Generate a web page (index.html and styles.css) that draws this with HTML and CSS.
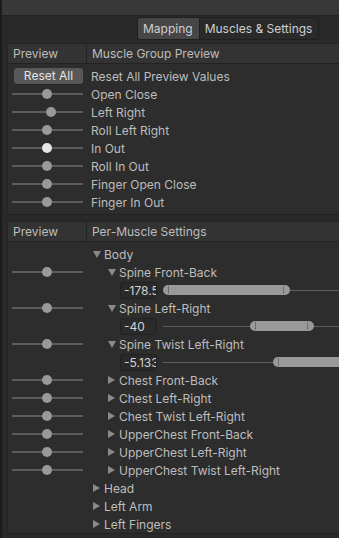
FILE: index.html
```html
<!DOCTYPE html>
<html>
<head>
<meta charset="utf-8">
<link rel="stylesheet" href="styles.css">
</head>
<body>
<div class="window">
  <div class="topband"></div>
  <div class="tabbar">
    <div class="tabs">
      <div class="tab active">Mapping</div>
      <div class="tab">Muscles &amp; Settings</div>
    </div>
  </div>

  <div class="section s1">
    <div class="head">
      <div class="hcol">Preview</div>
      <div class="hmain">Muscle Group Preview</div>
    </div>
    <div class="rows">
      <div class="row"><div class="lcol"><button class="btn">Reset All</button></div><div class="label">Reset All Preview Values</div></div>
      <div class="row"><div class="lcol"><div class="slider"><span class="thumb" style="left:35px"></span></div></div><div class="label">Open Close</div></div>
      <div class="row"><div class="lcol"><div class="slider"><span class="thumb" style="left:39px"></span></div></div><div class="label">Left Right</div></div>
      <div class="row"><div class="lcol"><div class="slider"><span class="thumb" style="left:35px"></span></div></div><div class="label">Roll Left Right</div></div>
      <div class="row"><div class="lcol"><div class="slider"><span class="thumb hot" style="left:35px"></span></div></div><div class="label">In Out</div></div>
      <div class="row"><div class="lcol"><div class="slider"><span class="thumb" style="left:35px"></span></div></div><div class="label">Roll In Out</div></div>
      <div class="row"><div class="lcol"><div class="slider"><span class="thumb" style="left:35px"></span></div></div><div class="label">Finger Open Close</div></div>
      <div class="row"><div class="lcol"><div class="slider"><span class="thumb" style="left:35px"></span></div></div><div class="label">Finger In Out</div></div>
    </div>
  </div>

  <div class="section s2">
    <div class="head">
      <div class="hcol">Preview</div>
      <div class="hmain">Per-Muscle Settings</div>
    </div>
    <div class="rows">
      <div class="row"><div class="lcol"></div><div class="tree d0"><span class="tri down"></span>Body</div></div>
      <div class="row"><div class="lcol"><div class="slider"><span class="thumb" style="left:35px"></span></div></div><div class="tree d1"><span class="tri down"></span>Spine Front-Back</div></div>
      <div class="row"><div class="lcol"></div><div class="range-row"><div class="field">-178.54</div><div class="range"><span class="bar" style="left:0px;width:127px"></span></div></div></div>
      <div class="row"><div class="lcol"><div class="slider"><span class="thumb" style="left:35px"></span></div></div><div class="tree d1"><span class="tri down"></span>Spine Left-Right</div></div>
      <div class="row"><div class="lcol"></div><div class="range-row"><div class="field">-40</div><div class="range"><span class="bar" style="left:87px;width:64px"></span></div></div></div>
      <div class="row"><div class="lcol"><div class="slider"><span class="thumb" style="left:35px"></span></div></div><div class="tree d1"><span class="tri down"></span>Spine Twist Left-Right</div></div>
      <div class="row"><div class="lcol"></div><div class="range-row"><div class="field">-5.1333</div><div class="range"><span class="bar" style="left:110px;width:127px"></span></div></div></div>
      <div class="row"><div class="lcol"><div class="slider"><span class="thumb" style="left:35px"></span></div></div><div class="tree d1"><span class="tri right"></span>Chest Front-Back</div></div>
      <div class="row"><div class="lcol"><div class="slider"><span class="thumb" style="left:35px"></span></div></div><div class="tree d1"><span class="tri right"></span>Chest Left-Right</div></div>
      <div class="row"><div class="lcol"><div class="slider"><span class="thumb" style="left:35px"></span></div></div><div class="tree d1"><span class="tri right"></span>Chest Twist Left-Right</div></div>
      <div class="row"><div class="lcol"><div class="slider"><span class="thumb" style="left:35px"></span></div></div><div class="tree d1"><span class="tri right"></span>UpperChest Front-Back</div></div>
      <div class="row"><div class="lcol"><div class="slider"><span class="thumb" style="left:35px"></span></div></div><div class="tree d1"><span class="tri right"></span>UpperChest Left-Right</div></div>
      <div class="row"><div class="lcol"><div class="slider"><span class="thumb" style="left:35px"></span></div></div><div class="tree d1"><span class="tri right"></span>UpperChest Twist Left-Right</div></div>
      <div class="row"><div class="lcol"></div><div class="tree d0"><span class="tri right"></span>Head</div></div>
      <div class="row"><div class="lcol"></div><div class="tree d0"><span class="tri right"></span>Left Arm</div></div>
      <div class="row"><div class="lcol"></div><div class="tree d0"><span class="tri right"></span>Left Fingers</div></div>
    </div>
  </div>
</div>
</body>
</html>
```

FILE: styles.css
```css
html, body {
  margin: 0;
  padding: 0;
  background: #292929;
  overflow: hidden;
}
body {
  width: 339px;
  height: 538px;
  font-family: Inter, "Noto Sans", sans-serif;
  font-size: 12px;
  color: #bdbdbd;
}
.window {
  border-left: 2px solid #1c1c1c;
  height: 538px;
  box-sizing: border-box;
  width: 420px;
}
.topband {
  height: 15px;
  background: #383838;
  border-bottom: 1px solid #232323;
}
.tabbar {
  height: 27px;
  display: flex;
  align-items: flex-start;
  padding-top: 1px;
  padding-left: 135px;
  box-sizing: border-box;
}
.tabs {
  display: flex;
  height: 23px;
  border: 1px solid #1f1f1f;
  border-radius: 3px;
  overflow: hidden;
  box-sizing: border-box;
}
.tab {
  background: #2a2a2a;
  color: #cfcfcf;
  font-size: 12px;
  line-height: 21px;
  padding: 0 6px 0 5px;
}
.tab.active {
  background: #464646;
  border-right: 1px solid #1f1f1f;
}
.section {
  margin-left: 5px;
  border: 1px solid #232323;
  background: #2d2d2d;
}
.s1 { padding-bottom: 3px; }
.s2 { margin-top: 6px; }
.head {
  display: flex;
  height: 19px;
  background: #333333;
  border-bottom: 1px solid #232323;
  line-height: 19px;
  color: #bdbdbd;
}
.hcol {
  width: 79px;
  border-right: 1px solid #232323;
  padding-left: 5px;
  box-sizing: border-box;
}
.hmain {
  padding-left: 5px;
}
.rows {
  padding-top: 3px;
}
.row {
  display: flex;
  height: 18px;
  align-items: center;
}
.lcol {
  width: 80px;
  flex: none;
  display: flex;
  align-items: center;
  padding-left: 4px;
  box-sizing: border-box;
}
.label {
  padding-left: 3px;
  white-space: nowrap;
}
.btn {
  width: 69px;
  height: 16px;
  margin-left: 2px;
  padding: 0;
  border: none;
  border-radius: 3px;
  background: #585858;
  color: #e4e4e4;
  font-family: Inter, "Noto Sans", sans-serif;
  font-size: 12px;
  line-height: 16px;
  box-shadow: 0 1px 0 #242424;
}
.slider {
  position: relative;
  width: 71px;
  height: 2px;
  background: #5c5c5c;
}
.thumb {
  position: absolute;
  top: -4px;
  width: 10px;
  height: 10px;
  margin-left: -5px;
  border-radius: 50%;
  background: #999999;
}
.thumb.hot {
  background: #e6e6e6;
}
.tree {
  display: flex;
  align-items: center;
  white-space: nowrap;
}
.tree.d0 { padding-left: 5px; }
.tree.d1 { padding-left: 20px; }
.tri {
  width: 0;
  height: 0;
  margin-right: 4px;
  flex: none;
}
.tri.down {
  border-left: 4px solid transparent;
  border-right: 4px solid transparent;
  border-top: 7px solid #8a8a8a;
  margin-right: 3px;
}
.tri.right {
  border-top: 4px solid transparent;
  border-bottom: 4px solid transparent;
  border-left: 7px solid #8a8a8a;
}
.range-row {
  display: flex;
  align-items: center;
  padding-left: 32px;
}
.field {
  width: 37px;
  height: 17px;
  box-sizing: border-box;
  border: 1px solid #212121;
  border-radius: 3px;
  background: #2a2a2a;
  color: #d2d2d2;
  line-height: 15px;
  padding-left: 3px;
  overflow: hidden;
  white-space: nowrap;
}
.range {
  position: relative;
  width: 220px;
  height: 1px;
  margin-left: 6px;
  background: #5e5e5e;
}
.bar {
  position: absolute;
  top: -5px;
  height: 10px;
  border-radius: 5px;
  background: #999999;
  box-sizing: border-box;
}
.bar::before, .bar::after {
  content: "";
  position: absolute;
  top: 1px;
  width: 1px;
  height: 8px;
  background: #6e6e6e;
}
.bar::before { left: 5px; }
.bar::after { right: 6px; }
```
